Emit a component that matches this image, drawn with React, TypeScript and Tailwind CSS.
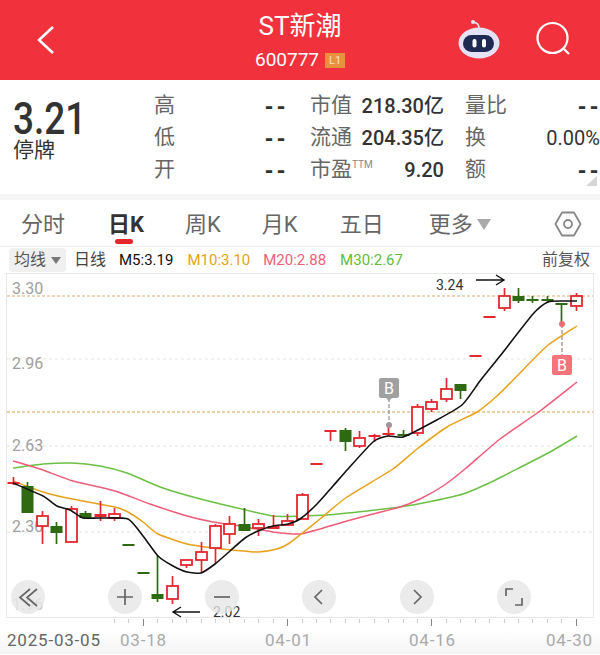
import React from "react";

const RED = "#e3282f";
const GREEN = "#2f6a12";
const cx = (i: number) => Math.round(13 + 14.43 * i) + 0.5;

type C = { i: number; c: "r" | "g"; t: number; b: number; w1: number; w2: number; solid?: boolean };
const candles: C[] = [
  { i: 0, c: "r", t: 483, b: 484, w1: 478, w2: 486, solid: true },
  { i: 1, c: "g", t: 487, b: 514, w1: 483, w2: 514 },
  { i: 2, c: "r", t: 517, b: 527, w1: 512, w2: 545 },
  { i: 3, c: "g", t: 527, b: 534, w1: 523, w2: 545 },
  { i: 4, c: "r", t: 510, b: 543, w1: 507, w2: 543 },
  { i: 5, c: "g", t: 514, b: 519, w1: 512, w2: 519 },
  { i: 6, c: "r", t: 515, b: 518, w1: 502, w2: 522 },
  { i: 7, c: "r", t: 515, b: 519, w1: 509, w2: 522 },
  { i: 8, c: "g", t: 545, b: 546, w1: 545, w2: 546 },
  { i: 9, c: "g", t: 573, b: 574, w1: 573, w2: 574 },
  { i: 10, c: "g", t: 595, b: 600, w1: 556, w2: 603 },
  { i: 11, c: "r", t: 587, b: 600, w1: 577, w2: 605 },
  { i: 12, c: "r", t: 561, b: 566, w1: 561, w2: 569 },
  { i: 13, c: "r", t: 553, b: 561, w1: 543, w2: 574 },
  { i: 14, c: "r", t: 527, b: 549, w1: 525, w2: 564 },
  { i: 15, c: "r", t: 525, b: 535, w1: 517, w2: 545 },
  { i: 16, c: "g", t: 525, b: 532, w1: 509, w2: 532 },
  { i: 17, c: "r", t: 525, b: 529, w1: 520, w2: 537 },
  { i: 18, c: "r", t: 527, b: 530, w1: 516, w2: 530 },
  { i: 19, c: "r", t: 522, b: 526, w1: 515, w2: 526 },
  { i: 20, c: "r", t: 496, b: 520, w1: 494, w2: 520 },
  { i: 21, c: "r", t: 464, b: 465, w1: 464, w2: 465 },
  { i: 22, c: "r", t: 431, b: 432, w1: 431, w2: 442 },
  { i: 23, c: "g", t: 431, b: 443, w1: 429, w2: 452 },
  { i: 24, c: "r", t: 439, b: 447, w1: 432, w2: 449 },
  { i: 25, c: "r", t: 436, b: 438, w1: 435, w2: 443, solid: true },
  { i: 26, c: "r", t: 434, b: 436, w1: 424, w2: 437, solid: true },
  { i: 27, c: "g", t: 435, b: 436, w1: 431, w2: 438 },
  { i: 28, c: "r", t: 408, b: 434, w1: 405, w2: 437 },
  { i: 29, c: "r", t: 403, b: 410, w1: 400, w2: 413 },
  { i: 30, c: "r", t: 390, b: 400, w1: 379, w2: 403 },
  { i: 31, c: "g", t: 385, b: 392, w1: 385, w2: 400 },
  { i: 32, c: "r", t: 356, b: 357, w1: 356, w2: 357 },
  { i: 33, c: "r", t: 317, b: 318, w1: 317, w2: 318 },
  { i: 34, c: "r", t: 297, b: 309, w1: 289, w2: 312 },
  { i: 35, c: "g", t: 297, b: 302, w1: 289, w2: 304 },
  { i: 36, c: "g", t: 300, b: 301, w1: 297, w2: 304 },
  { i: 37, c: "g", t: 300, b: 301, w1: 297, w2: 304 },
  { i: 38, c: "g", t: 304, b: 305, w1: 304, w2: 325 },
  { i: 39, c: "r", t: 297, b: 307, w1: 294, w2: 312 },
];

const ma5 = "13,484 43,497 57,507 70,511 83,519 100,519 128,520 143,537 158,557 173,567 187,573 201,574 215,565 230,552 245,539 258,532 273,527 288,525 300,520 317,505 333,487 348,470 373,443 388,437 403,438 433,423 462,406 480,382 500,357 533,315 548,303 563,302 577,302";
const ma10 = "13,482 43,493 67,499 115,508 128,513 143,523 158,535 187,545 213,549 233,551 258,553 277,550 288,545 300,536 320,520 347,498 393,470 417,450 447,428 477,413 497,397 517,377 547,347 577,327";
const ma20 = "13,462 40,470 73,482 115,492 150,505 187,517 213,523 240,527 273,533 300,535 320,530 347,522 373,515 400,508 420,500 443,487 465,470 500,440 540,412 577,383";
const ma30 = "13,469 43,465 72,464 100,467 127,474 160,488 193,498 233,508 273,517 300,517 327,516 367,512 400,508 433,502 463,495 487,485 517,470 550,453 577,437";

function smooth(points: string): string {
  const p = points.split(" ").map((s) => s.split(",").map(Number));
  let d = `M${p[0][0]} ${p[0][1]}`;
  for (let i = 0; i < p.length - 1; i++) {
    const a = p[Math.max(i - 1, 0)];
    const b = p[i];
    const c = p[i + 1];
    const e = p[Math.min(i + 2, p.length - 1)];
    const c1x = b[0] + (c[0] - a[0]) / 10;
    const c1y = b[1] + (c[1] - a[1]) / 10;
    const c2x = c[0] - (e[0] - b[0]) / 10;
    const c2y = c[1] - (e[1] - b[1]) / 10;
    d += ` C${c1x} ${c1y} ${c2x} ${c2y} ${c[0]} ${c[1]}`;
  }
  return d;
}

function Candle({ d }: { d: C }) {
  const x = cx(d.i);
  const col = d.c === "r" ? RED : GREEN;
  const h = d.b - d.t;
  const hollow = d.c === "r" && h > 3 && !d.solid;
  return (
    <g>
      <line x1={x} x2={x} y1={d.w1} y2={d.w2} stroke={col} strokeWidth={1.7} />
      {hollow ? (
        <rect x={x - 5.5} y={d.t} width={11} height={h} fill="#fff" stroke={col} strokeWidth={1.8} />
      ) : (
        <rect x={x - 6} y={d.t} width={12} height={Math.max(h, 2)} fill={col} />
      )}
    </g>
  );
}

function Round({ x, children }: { x: number; children: React.ReactNode }) {
  return (
    <div
      className="absolute top-[307px] w-[34px] h-[34px] rounded-full bg-[#e6e6e6]/80 flex items-center justify-center"
      style={{ left: x - 17 }}
    >
      <svg width="22" height="22" viewBox="0 0 22 22" fill="none" stroke="#666" strokeWidth="1.7">
        {children}
      </svg>
    </div>
  );
}

function Stat({ label, value, sup, strong }: { label: string; value: string; sup?: boolean; strong?: boolean }) {
  const dash = value === "--";
  return (
    <div className="flex justify-between items-center h-8">
      <span className="text-[21px] text-[#666] whitespace-nowrap">
        {label}
        {sup && <sup className="text-[10px] text-[#888] top-[-8px]">TTM</sup>}
      </span>
      {dash ? (
        <span className="text-[20px] font-['DejaVu_Sans_Mono',monospace] text-[#333] font-bold whitespace-nowrap">--</span>
      ) : (
        <span className={`text-[20px] text-[#333] whitespace-nowrap ${strong ? "font-medium" : ""}`}>{value}</span>
      )}
    </div>
  );
}

export default function App() {
  return (
    <div className="w-[600px] h-[655px] overflow-hidden bg-white font-['Roboto','Noto_Sans_CJK_SC',sans-serif]">
      {/* header */}
      <header className="relative h-20 bg-[#f1323c] text-white flex flex-col items-center">
        <div className="text-[26px] leading-[30px] mt-[11px]">ST新潮</div>
        <div className="flex items-center gap-[6px] mt-[7px]">
          <span className="text-[19px] leading-6">600777</span>
          <span className="w-5 h-[15px] bg-[#e8913f] text-[#fbe3c8] text-[11px] leading-[15px] text-center">L1</span>
        </div>
        <svg className="absolute left-[34px] top-[24px]" width="24" height="32" viewBox="0 0 24 32" fill="none" stroke="#fff" strokeWidth="2.6">
          <path d="M19 3 L5 16 L19 29" />
        </svg>
        <svg className="absolute left-[457px] top-[18px]" width="44" height="42" viewBox="0 0 44 42">
          <path d="M22 10 Q22 5 16 4" stroke="#e6e4f4" strokeWidth="1.6" fill="none" />
          <circle cx="16" cy="4" r="2" fill="#e6e4f4" />
          <ellipse cx="22" cy="25" rx="20.5" ry="15.5" fill="#e4e2f4" />
          <rect x="6" y="17" width="31" height="17" rx="8.5" fill="#1f2a52" />
          <rect x="15.5" y="21" width="4" height="8.5" rx="2" fill="#fff" />
          <rect x="25" y="21" width="4" height="8.5" rx="2" fill="#fff" />
        </svg>
        <svg className="absolute left-[534px] top-[20px]" width="38" height="38" viewBox="0 0 38 38" fill="none" stroke="#fff" strokeWidth="2.2">
          <circle cx="18.5" cy="18" r="15" />
          <path d="M30 29 L35 34" />
        </svg>
      </header>

      {/* stats */}
      <section className="relative h-[114px] flex">
        <div className="w-[154px] pl-[13px] pt-[18px] text-[#333]">
          <div className="text-[37px] leading-[36px] font-medium origin-top scale-y-[1.2]">3.21</div>
          <div className="text-[21px] leading-[22px] mt-[5px]">停牌</div>
        </div>
        <div className="flex pt-[10px]">
          <div className="w-[133px]">
            <Stat label="高" value="--" />
            <Stat label="低" value="--" />
            <Stat label="开" value="--" />
          </div>
          <div className="w-[134px] ml-[23px]">
            <Stat label="市值" value="218.30亿" strong />
            <Stat label="流通" value="204.35亿" strong />
            <Stat label="市盈" sup value="9.20" strong />
          </div>
          <div className="w-[135px] ml-[21px]">
            <Stat label="量比" value="--" />
            <Stat label="换" value="0.00%" />
            <Stat label="额" value="--" />
          </div>
        </div>
        <div className="absolute right-[3px] bottom-[8px] w-0 h-0 border-l-[11px] border-l-transparent border-b-[10px] border-b-[#d6d6d6]" />
      </section>
      <div className="h-[6px] bg-[#f5f5f5]" />

      {/* tabs */}
      <nav className="relative h-[47px] border-b border-[#eeeeee] flex items-center text-[22px] text-[#666] pt-[2px]">
        <span className="ml-[21px]">分时</span>
        <span className="relative ml-[43px] font-bold text-[#333]">
          日K
          <span className="absolute left-[7px] top-[31px] w-[18px] h-[5px] rounded-full bg-[#e5282f]" />
        </span>
        <span className="ml-[41px]">周K</span>
        <span className="ml-[41px]">月K</span>
        <span className="ml-[42px]">五日</span>
        <span className="ml-[45px]">更多</span>
        <span className="ml-[4px] w-0 h-0 border-x-[7px] border-x-transparent border-t-[11px] border-t-[#aaaaaa]" />
        <svg className="absolute left-[554px] top-[10px]" width="28" height="28" viewBox="0 0 28 28" fill="none" stroke="#888" strokeWidth="1.8">
          <path d="M8 2.5 H20 L26.5 14 L20 25.5 H8 L1.5 14 Z" strokeLinejoin="round" />
          <circle cx="14" cy="14" r="4" />
        </svg>
      </nav>

      {/* legend */}
      <div className="h-[26px] flex items-center text-[16px] whitespace-nowrap">
        <div className="ml-[9px] w-[57px] h-[24px] bg-[#f0f0f0] rounded-sm flex items-center pl-[5px] text-[#555]">
          均线
          <span className="ml-[5px] w-0 h-0 border-x-[5px] border-x-transparent border-t-[7px] border-t-[#777]" />
        </div>
        <span className="ml-[8px] text-[#444]">日线</span>
        <span className="ml-[13px] text-[15px] text-[#111]">M5:3.19</span>
        <span className="ml-[14px] text-[15px] text-[#e9a116]">M10:3.10</span>
        <span className="ml-[13px] text-[15px] text-[#f0607a]">M20:2.88</span>
        <span className="ml-[14px] text-[15px] text-[#66bb3c]">M30:2.67</span>
        <span className="ml-auto mr-[10px] text-[#555]">前复权</span>
      </div>

      {/* chart */}
      <section className="relative h-[346px]">
        <svg className="block w-full h-full" viewBox="0 274 600 346" fontFamily="Roboto, sans-serif">
          <rect x="6.5" y="274.5" width="587" height="344" fill="#fff" stroke="#e8e8e8" />
          <line x1="7" x2="593" y1="297" y2="297" stroke="#d9a877" strokeDasharray="3 2" />
          <line x1="7" x2="593" y1="413" y2="413" stroke="#d9a04f" strokeDasharray="3 2" />
          {[360, 447, 533].map((y) => (
            <line key={y} x1="7" x2="593" y1={y} y2={y} stroke="#e3e3e3" strokeDasharray="3 3" />
          ))}
          <g fontSize="16" fill="#a0a0a0">
            <text x="12" y="295">3.30</text>
            <text x="12" y="370">2.96</text>
            <text x="12" y="452">2.63</text>
            <text x="12" y="533">2.30</text>
            <text x="12" y="611" fill="#c4c4c4">1.96</text>
          </g>
          <path d={smooth(ma30)} fill="none" stroke="#6cc044" strokeWidth="1.5" />
          <path d={smooth(ma20)} fill="none" stroke="#ee5c7a" strokeWidth="1.5" />
          <path d={smooth(ma10)} fill="none" stroke="#e9a11c" strokeWidth="1.5" />
          {candles.map((d) => (
            <Candle key={d.i} d={d} />
          ))}
          <path d={smooth(ma5)} fill="none" stroke="#111" strokeWidth="1.6" />

          {/* grey B */}
          <line x1="389" x2="389" y1="399" y2="426" stroke="#999" strokeWidth="1.3" strokeDasharray="4 2" />
          <circle cx="389" cy="426" r="3" fill="#999" />
          <path d="M381 379 H397 a2 2 0 0 1 2 2 V397 a2 2 0 0 1 -2 2 H392 L389 402 L386 399 H381 a2 2 0 0 1 -2 -2 V381 a2 2 0 0 1 2 -2Z" fill="#a0a0a0" />
          <text x="389" y="395" textAnchor="middle" fontSize="16" fill="#fff">B</text>
          {/* red B */}
          <line x1="562" x2="562" y1="325" y2="356" stroke="#a58b8b" strokeWidth="1.3" strokeDasharray="4 2" />
          <circle cx="562" cy="325" r="3" fill="#ef6b72" />
          <path d="M554 356 H570 a2 2 0 0 1 2 2 V374 a2 2 0 0 1 -2 2 H554 a2 2 0 0 1 -2 -2 V358 a2 2 0 0 1 2 -2Z" fill="#f4747b" />
          <text x="562" y="372" textAnchor="middle" fontSize="16" fill="#fff">B</text>

          {/* high / low */}
          <text x="436" y="291" fontSize="14" fill="#333">3.24</text>
          <path d="M476 281 H504 M496 276 L504 281 L496 286" fill="none" stroke="#111" strokeWidth="1.4" />
          <text x="213" y="618" fontSize="14" fill="#333">2.02</text>
          <path d="M200 613 H173 M181 608 L173 613 L181 618" fill="none" stroke="#111" strokeWidth="1.4" />
        </svg>

        <Round x={28}>
          <path d="M13 3 L3 11.5 L13 20 M20 3 L10 11.5 L20 20" />
        </Round>
        <Round x={125}>
          <path d="M11 3 V19 M3 11 H19" />
        </Round>
        <Round x={222}>
          <path d="M3 11 H19" />
        </Round>
        <Round x={319}>
          <path d="M14 4 L7 11 L14 18" />
        </Round>
        <Round x={417}>
          <path d="M8 4 L15 11 L8 18" />
        </Round>
        <Round x={514}>
          <path d="M10 3 H3 V10 M12 19 H19 V12" />
        </Round>
      </section>

      {/* axis */}
      <footer className="relative h-[35px] bg-gradient-to-b from-white from-30% to-[#f4f4f4]">
        <svg className="absolute left-0 top-0" width="600" height="9">
          {candles.filter((d) => d.i >= 7 && d.i !== 39).map((d) => {
            const major = [9, 19, 29].includes(d.i);
            return <line key={d.i} x1={cx(d.i)} x2={cx(d.i)} y1="0" y2={major ? 7 : 4} stroke={major ? "#888" : "#cfcfcf"} />;
          })}
          <line x1={cx(39)} x2={cx(39)} y1="0" y2="7" stroke="#888" />
        </svg>
        <div className="flex pt-[11px] text-[17px] leading-5 tracking-[0.8px] text-[#aaa] whitespace-nowrap">
          <span className="ml-[7px] w-[113px] text-[#666]">2025-03-05</span>
          <span className="w-[145px]">03-18</span>
          <span className="w-[144px]">04-01</span>
          <span className="w-[137px]">04-16</span>
          <span>04-30</span>
        </div>
      </footer>
    </div>
  );
}
